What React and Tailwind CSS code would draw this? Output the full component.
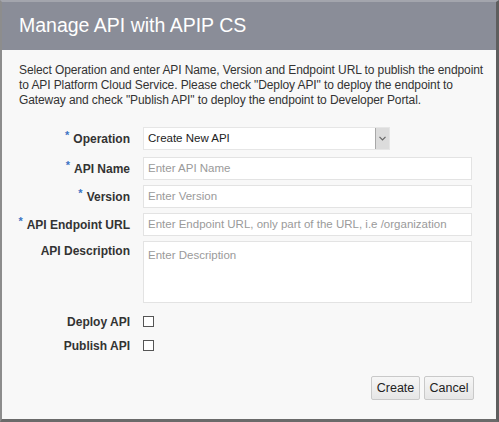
import React from "react";

const font = { fontFamily: '"Liberation Sans", Arial, sans-serif' };

function Label({ req, children, top }) {
  return (
    <div className={`w-[111px] shrink-0 flex justify-end whitespace-nowrap text-[12px] font-bold text-[#333] ${top ? "items-start pt-[1px]" : "items-center"}`}>
      {req && <span className="text-[#3c74c4] text-[11px] mr-[4px] relative -top-[3px]">*</span>}
      <span>{children}</span>
    </div>
  );
}

const inputCls = "w-[329px] border border-[#e3e3e3] bg-white flex items-center pl-[4px] text-[11.5px] text-[#9a9a9a] whitespace-nowrap overflow-hidden";

export default function App() {
  return (
    <div className="w-[499px] h-[422px] flex flex-col bg-[#f8f8f8] border-l-2 border-l-[#8d8d8d] border-r-[3px] border-r-[#5e5e5e] border-b-[3px] border-b-[#6a6a6a] border-t-2 border-t-[#a3a5ad]" style={font}>
      <div className="h-[48px] shrink-0 bg-[#8a8d98] flex items-center pl-[17px]">
        <h1 className="text-white text-[19.5px] leading-none">Manage API with APIP CS</h1>
      </div>
      <div className="flex-1 pl-[17px] pr-[10px] pt-[13px] text-[#333]">
        <p className="text-[12px] tracking-[-0.1px] leading-[15px]">
          Select Operation and enter API Name, Version and Endpoint URL to publish the endpoint to API Platform Cloud Service. Please check "Deploy API" to deploy the endpoint to Gateway and check "Publish API" to deploy the endpoint to Developer Portal.
        </p>
        <div className="mt-[19px] flex flex-col">
          <div className="flex gap-[13px] h-[23px]">
            <Label req>Operation</Label>
            <div className="w-[247px] flex border border-[#e6e6e6] bg-white">
              <div className="flex-1 flex items-center pl-[4px] text-[11.5px] text-[#222]">Create New API</div>
              <div className="w-[14px] bg-[#dcdcdc] border-l border-[#a8a8a8] flex items-center justify-center">
                <svg width="7" height="5" viewBox="0 0 7 5"><path d="M0.5 0.8 L3.5 3.8 L6.5 0.8" fill="none" stroke="#666" strokeWidth="1.2" /></svg>
              </div>
            </div>
          </div>
          <div className="flex gap-[13px] h-[23px] mt-[7px]">
            <Label req>API Name</Label>
            <div className={inputCls}>Enter API Name</div>
          </div>
          <div className="flex gap-[13px] h-[23px] mt-[5px]">
            <Label req>Version</Label>
            <div className={inputCls}>Enter Version</div>
          </div>
          <div className="flex gap-[13px] h-[23px] mt-[5px]">
            <Label req>API Endpoint URL</Label>
            <div className={inputCls}>Enter Endpoint URL, only part of the URL, i.e /organization</div>
          </div>
          <div className="flex gap-[13px] h-[62px] mt-[5px]">
            <Label top>API Description</Label>
            <div className="w-[329px] border border-[#e3e3e3] bg-white pl-[4px] pt-[5px] text-[11.5px] text-[#9a9a9a]">Enter Description</div>
          </div>
          <div className="flex gap-[13px] h-[15px] mt-[11px] items-center">
            <Label>Deploy API</Label>
            <div className="w-[11px] h-[11px] border border-[#555] bg-white" />
          </div>
          <div className="flex gap-[13px] h-[15px] mt-[9px] items-center">
            <Label>Publish API</Label>
            <div className="w-[11px] h-[11px] border border-[#555] bg-white" />
          </div>
          <div className="flex justify-end gap-[4px] mt-[23px] pr-[12px]">
            <button className="h-[24px] w-[49px] text-[12.5px] text-[#222] bg-gradient-to-b from-[#f6f6f6] to-[#e6e6e6] border border-[#c9c9c9] rounded-[2px]">Create</button>
            <button className="h-[24px] w-[50px] text-[12.5px] text-[#222] bg-gradient-to-b from-[#f6f6f6] to-[#e6e6e6] border border-[#c9c9c9] rounded-[2px]">Cancel</button>
          </div>
        </div>
      </div>
    </div>
  );
}
